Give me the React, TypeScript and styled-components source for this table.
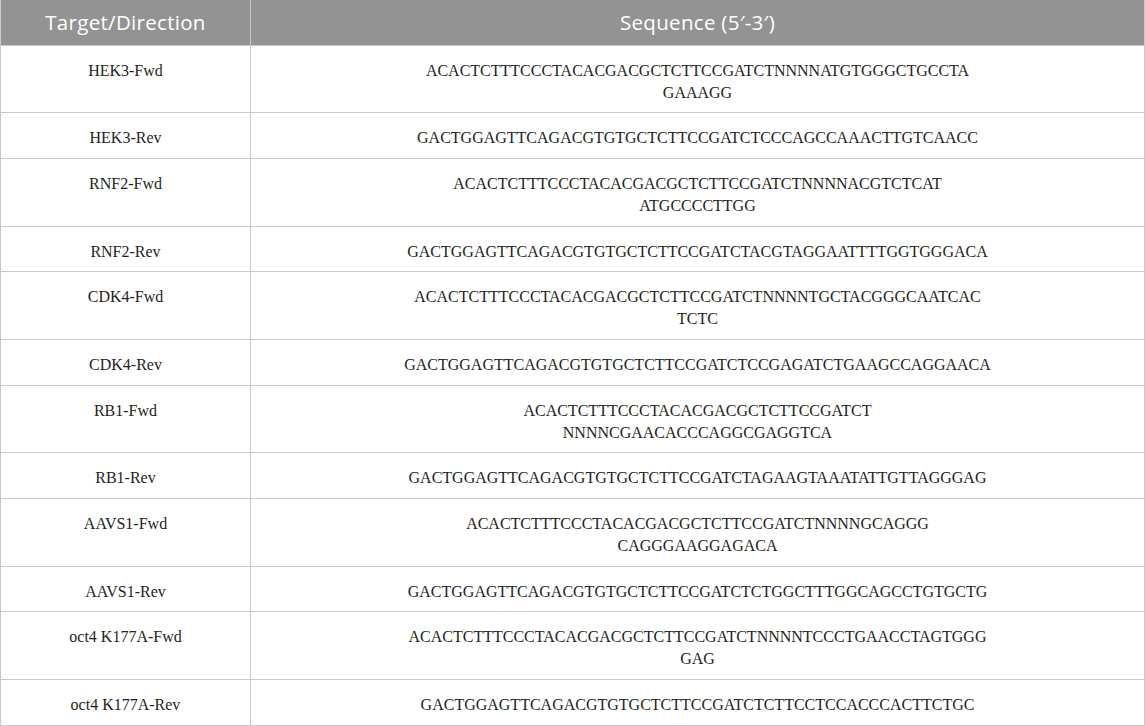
import React from "react";
import styled, { createGlobalStyle } from "styled-components";

const Global = createGlobalStyle`
  html, body { margin: 0; padding: 0; background: #ffffff; }
  body { width: 1145px; }
`;

const Table = styled.table`
  width: 1145px;
  border-collapse: collapse;
  table-layout: fixed;
`;

const HeadCell = styled.th<{ $w?: number }>`
  width: ${(p) => (p.$w ? `${p.$w}px` : "auto")};
  height: 45px;
  box-sizing: border-box;
  padding: 0 8px;
  background: #939393;
  color: #ffffff;
  font-family: "Open Sans", "Noto Sans", sans-serif;
  font-weight: 400;
  font-size: 20.5px;
  letter-spacing: 0.3px;
  text-align: center;
  vertical-align: middle;
  border-left: 1px solid #c9c9c9;
  border-right: 1px solid #c9c9c9;
`;

const Cell = styled.td`
  padding: 14px 8px 8.7px;
  font-family: "Liberation Serif", "Times New Roman", serif;
  font-size: 16px;
  line-height: 22px;
  color: #231f20;
  text-align: center;
  vertical-align: top;
  border: 1px solid #c9c9c9;
`;

const Line = styled.span`
  display: block;
  white-space: nowrap;
`;

const rows: [string, string[]][] = [
  ["HEK3-Fwd", ["ACACTCTTTCCCTACACGACGCTCTTCCGATCTNNNNATGTGGGCTGCCTA", "GAAAGG"]],
  ["HEK3-Rev", ["GACTGGAGTTCAGACGTGTGCTCTTCCGATCTCCCAGCCAAACTTGTCAACC"]],
  ["RNF2-Fwd", ["ACACTCTTTCCCTACACGACGCTCTTCCGATCTNNNNACGTCTCAT", "ATGCCCCTTGG"]],
  ["RNF2-Rev", ["GACTGGAGTTCAGACGTGTGCTCTTCCGATCTACGTAGGAATTTTGGTGGGACA"]],
  ["CDK4-Fwd", ["ACACTCTTTCCCTACACGACGCTCTTCCGATCTNNNNTGCTACGGGCAATCAC", "TCTC"]],
  ["CDK4-Rev", ["GACTGGAGTTCAGACGTGTGCTCTTCCGATCTCCGAGATCTGAAGCCAGGAACA"]],
  ["RB1-Fwd", ["ACACTCTTTCCCTACACGACGCTCTTCCGATCT", "NNNNCGAACACCCAGGCGAGGTCA"]],
  ["RB1-Rev", ["GACTGGAGTTCAGACGTGTGCTCTTCCGATCTAGAAGTAAATATTGTTAGGGAG"]],
  ["AAVS1-Fwd", ["ACACTCTTTCCCTACACGACGCTCTTCCGATCTNNNNGCAGGG", "CAGGGAAGGAGACA"]],
  ["AAVS1-Rev", ["GACTGGAGTTCAGACGTGTGCTCTTCCGATCTCTGGCTTTGGCAGCCTGTGCTG"]],
  ["oct4 K177A-Fwd", ["ACACTCTTTCCCTACACGACGCTCTTCCGATCTNNNNTCCCTGAACCTAGTGGG", "GAG"]],
  ["oct4 K177A-Rev", ["GACTGGAGTTCAGACGTGTGCTCTTCCGATCTCTTCCTCCACCCACTTCTGC"]],
];

export default function App() {
  return (
    <>
      <Global />
      <Table>
        <thead>
          <tr>
            <HeadCell $w={250}>Target/Direction</HeadCell>
            <HeadCell>Sequence (5′-3′)</HeadCell>
          </tr>
        </thead>
        <tbody>
          {rows.map(([name, seq]) => (
            <tr key={name}>
              <Cell>{name}</Cell>
              <Cell>
                {seq.map((s, i) => (
                  <Line key={i}>{s}</Line>
                ))}
              </Cell>
            </tr>
          ))}
        </tbody>
      </Table>
    </>
  );
}
